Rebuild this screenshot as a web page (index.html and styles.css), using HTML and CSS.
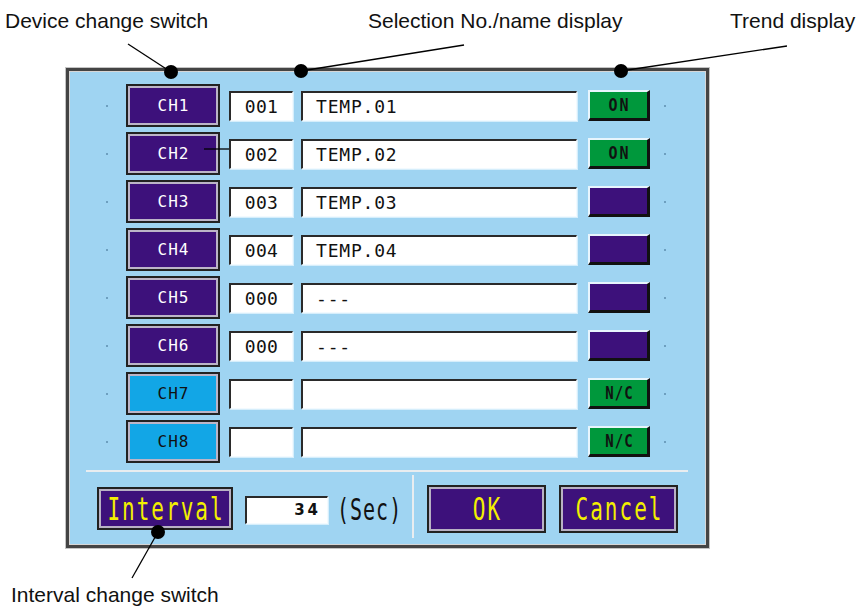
FILE: index.html
```html
<!DOCTYPE html>
<html lang="en">
<head>
    <meta charset="UTF-8">
    <meta name="viewport" content="width=device-width, initial-scale=1.0">
    <title>Trend channel setting</title>
    <link rel="stylesheet" href="styles.css">
</head>
<body>
    <div class="figure">
        <span class="callout lbl-device">Device change switch</span>
        <span class="callout lbl-selection">Selection No./name display</span>
        <span class="callout lbl-trend">Trend display</span>

        <div class="panel">
            <div class="rows">
                <div class="row">
                    <div class="ch">CH1</div>
                    <div class="field num">001</div>
                    <div class="field name">TEMP.01</div>
                    <div class="trend on"><span>ON</span></div>
                </div>
                <div class="row">
                    <div class="ch">CH2</div>
                    <div class="field num">002</div>
                    <div class="field name">TEMP.02</div>
                    <div class="trend on"><span>ON</span></div>
                </div>
                <div class="row">
                    <div class="ch">CH3</div>
                    <div class="field num">003</div>
                    <div class="field name">TEMP.03</div>
                    <div class="trend"></div>
                </div>
                <div class="row">
                    <div class="ch">CH4</div>
                    <div class="field num">004</div>
                    <div class="field name">TEMP.04</div>
                    <div class="trend"></div>
                </div>
                <div class="row">
                    <div class="ch">CH5</div>
                    <div class="field num">000</div>
                    <div class="field name">---</div>
                    <div class="trend"></div>
                </div>
                <div class="row">
                    <div class="ch">CH6</div>
                    <div class="field num">000</div>
                    <div class="field name">---</div>
                    <div class="trend"></div>
                </div>
                <div class="row">
                    <div class="ch free">CH7</div>
                    <div class="field num"></div>
                    <div class="field name"></div>
                    <div class="trend on nc"><span>N/C</span></div>
                </div>
                <div class="row">
                    <div class="ch free">CH8</div>
                    <div class="field num"></div>
                    <div class="field name"></div>
                    <div class="trend on nc"><span>N/C</span></div>
                </div>
            </div>

            <div class="sep"></div>

            <div class="footer">
                <div class="key interval"><span>Interval</span></div>
                <div class="field value">34</div>
                <span class="unit"><span>(Sec)</span></span>
                <div class="vsep"></div>
                <div class="key ok"><span>OK</span></div>
                <div class="key cancel"><span>Cancel</span></div>
            </div>
        </div>

        <span class="callout lbl-interval">Interval change switch</span>

        <svg class="leaders" width="858" height="607" viewBox="0 0 858 607">
            <g stroke="#000" stroke-width="1.3" fill="none">
                <line x1="128" y1="44" x2="171" y2="72"/>
                <line x1="464" y1="45" x2="301" y2="71"/>
                <line x1="787" y1="46" x2="621" y2="71"/>
                <line x1="158" y1="532" x2="132" y2="578"/>
                <line x1="204" y1="149" x2="229" y2="149"/>
            </g>
            <g fill="#000">
                <circle cx="171" cy="72" r="7"/>
                <circle cx="301" cy="71" r="7"/>
                <circle cx="621" cy="71" r="7"/>
                <circle cx="158" cy="532" r="7"/>
            </g>
        </svg>
    </div>
</body>
</html>
```

FILE: styles.css
```css
* {
    box-sizing: border-box;
}
body {
    margin: 0;
    background: #fff;
    font-family: "Liberation Sans", Arial, sans-serif;
}
.figure {
    position: relative;
    width: 858px;
    height: 607px;
    overflow: hidden;
    padding-top: 68px;
    padding-left: 66px;
}
.callout {
    position: absolute;
    font-size: 21px;
    line-height: 24px;
    color: #111;
    white-space: nowrap;
}
.lbl-device { left: 5px; top: 9px; }
.lbl-selection { left: 368px; top: 9px; }
.lbl-trend { left: 730px; top: 9px; }
.lbl-interval { left: 11px; top: 583px; }
.leaders {
    position: absolute;
    left: 0;
    top: 0;
    pointer-events: none;
}

.panel {
    width: 643px;
    height: 480px;
    background: #9fd4f2;
    border: 3px solid #444;
    box-shadow: 0 0 0 1px #c4c4c4, inset 0 0 0 1px #d6d6d6;
    padding: 13px 0 0 17px;
}
.rows {
    display: flex;
    flex-direction: column;
    gap: 5px;
    padding-left: 40px;
}
.row {
    position: relative;
    display: flex;
    align-items: center;
    height: 43px;
}
.row::before,
.row::after {
    content: "";
    position: absolute;
    top: 21px;
    width: 2px;
    height: 2px;
    background: #6d9fbf;
}
.row::before { left: -20px; }
.row::after { right: 40px; }

.ch {
    width: 94px;
    height: 43px;
    margin-right: 9px;
    display: flex;
    align-items: center;
    justify-content: center;
    padding-left: 1px;
    background: #3d117b;
    color: #fff;
    border: 2px solid #222;
    box-shadow: inset 0 0 0 2px #bcb5c8;
    font-family: "DejaVu Sans Mono", monospace;
    font-size: 16px;
    letter-spacing: 1px;
}
.ch.free {
    background: #12a6e6;
    color: #111;
}
.field {
    height: 30px;
    display: flex;
    align-items: center;
    background: #fff;
    border-style: solid;
    border-width: 2px 1px 1px 2px;
    border-color: #2a2a2a #f2faff #f2faff #2a2a2a;
    box-shadow: 1px 1px 0 #d6eefb;
    font-family: "DejaVu Sans Mono", monospace;
    font-size: 18px;
    color: #111;
}
.num {
    width: 64px;
    margin-right: 8px;
    justify-content: center;
    letter-spacing: 0.3px;
}
.name {
    width: 276px;
    margin-right: 11px;
    padding-left: 13px;
    letter-spacing: 0.8px;
}
.trend {
    width: 62px;
    height: 31px;
    display: flex;
    align-items: center;
    justify-content: center;
    padding-left: 2px;
    background: #3d117b;
    border-style: solid;
    border-width: 2px 3px 3px 2px;
    border-color: #e8f5fd #111 #111 #e8f5fd;
    font-family: "DejaVu Sans Mono", monospace;
    font-weight: bold;
    font-size: 15px;
    letter-spacing: 2px;
    color: #111;
}
.trend span {
    display: inline-block;
    transform: scaleY(1.2);
}
.trend.on {
    background: #00983c;
}
.trend.nc {
    font-size: 14px;
    letter-spacing: 1px;
}

.sep {
    width: 602px;
    height: 2px;
    margin-top: 7px;
    background: #e9edf0;
}
.footer {
    display: flex;
    align-items: center;
    height: 63px;
    margin-top: 3px;
    padding-left: 11px;
}
.key {
    display: flex;
    align-items: center;
    justify-content: center;
    padding-left: 2px;
    background: #3d117b;
    border: 2px solid #222;
    box-shadow: inset 0 0 0 2px #b8b1c4;
    color: #f3ef00;
    font-family: "DejaVu Sans Mono", monospace;
    font-size: 21px;
    letter-spacing: 2px;
}
.key span,
.unit span {
    display: inline-block;
    transform: scaleY(1.5);
}
.interval {
    width: 136px;
    height: 43px;
    margin-top: 4px;
}
.ok,
.cancel {
    width: 119px;
    height: 48px;
    margin-left: 13px;
    margin-top: 4px;
}
.value {
    width: 83px;
    height: 28px;
    margin-left: 12px;
    margin-top: 6px;
    justify-content: flex-end;
    padding-right: 6px;
    font-family: "DejaVu Sans", sans-serif;
    font-weight: bold;
    font-size: 15px;
    letter-spacing: 3px;
}
.unit {
    width: 75px;
    margin-left: 9px;
    margin-top: 4px;
    font-family: "DejaVu Sans Mono", monospace;
    font-size: 20px;
    letter-spacing: 1px;
    color: #111;
}
.vsep {
    width: 2px;
    height: 63px;
    background: #e9edf0;
}
```
